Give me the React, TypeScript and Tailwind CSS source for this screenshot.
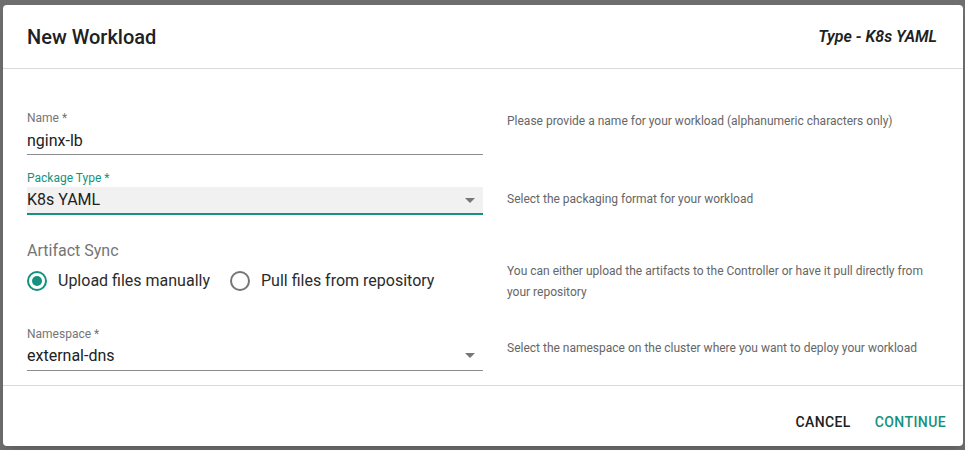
import React from "react";

const teal = "text-[#14927f]";

const HelpText = ({ children, className = "" }: { children: React.ReactNode; className?: string }) => (
  <p className={`text-[12px] leading-[21px] text-[#666666] ${className}`}>{children}</p>
);

const Arrow = () => (
  <svg width="10" height="5" viewBox="0 0 10 5" className="mr-[8px]">
    <path d="M0 0 L10 0 L5 5 Z" fill="#777777" />
  </svg>
);

const Radio = ({ checked, label }: { checked: boolean; label: string }) => (
  <label className="flex items-center gap-[11px]">
    <span
      className={`flex h-[20px] w-[20px] items-center justify-center rounded-full border-2 ${
        checked ? "border-[#14927f]" : "border-[#757575]"
      }`}
    >
      {checked && <span className="h-[10px] w-[10px] rounded-full bg-[#14927f]" />}
    </span>
    <span className="text-[16px] text-[#2b2b2b]">{label}</span>
  </label>
);

const App = () => {
  return (
    <main
      className="h-[450px] w-[965px] overflow-hidden bg-[#6e6e6e] pl-[3px] pt-[5px]"
      style={{ fontFamily: "Roboto, 'Liberation Sans', sans-serif" }}
    >
      <div className="flex h-[441px] w-[960px] flex-col rounded-[4px] bg-white shadow-lg">
        {/* ----------------------------------------header---------------------------------------- */}
        <header className="flex h-[64px] items-center justify-between border-b border-[#d9d9d9] px-[24px]">
          <h2 className="text-[20px] font-medium text-[#212121]">New Workload</h2>
          <span className="mr-[2px] text-[16px] font-semibold italic text-[#212121]">Type - K8s YAML</span>
        </header>

        {/* ----------------------------------------body---------------------------------------- */}
        <section className="flex-1 border-b border-[#d9d9d9] px-[24px] pt-[41px]">
          {/* name */}
          <div className="flex gap-[24px]">
            <div className="w-[456px]">
              <div className="text-[12px] leading-[16px] text-[#757575]">Name *</div>
              <div className="flex h-[29px] items-center border-b border-[#8c8c8c] pb-[1px] pt-[3px] text-[16px] text-[#212121]">
                nginx-lb
              </div>
            </div>
            <HelpText className="pt-[1px]">
              Please provide a name for your workload (alphanumeric characters only)
            </HelpText>
          </div>

          {/* package type */}
          <div className="mt-[15px] flex gap-[24px]">
            <div className="w-[456px]">
              <div className={`text-[12px] leading-[16px] ${teal}`}>Package Type *</div>
              <div className="mt-[1px] flex h-[28px] items-center justify-between border-b-2 border-[#14927f] bg-[#f1f1f1] text-[16px] text-[#212121]">
                <span>K8s YAML</span>
                <Arrow />
              </div>
            </div>
            <HelpText className="pt-[19px]">Select the packaging format for your workload</HelpText>
          </div>

          {/* artifact sync */}
          <div className="mt-[24px] flex gap-[24px]">
            <div className="w-[456px]">
              <div className="text-[16px] leading-[24px] text-[#757575]">Artifact Sync</div>
              <div className="mt-[6px] flex items-center gap-[20px]">
                <Radio checked label="Upload files manually" />
                <Radio checked={false} label="Pull files from repository" />
              </div>
            </div>
            <HelpText className="w-[420px] pt-[22px]">
              You can either upload the artifacts to the Controller or have it pull directly from your
              repository
            </HelpText>
          </div>

          {/* namespace */}
          <div className="mt-[23px] flex gap-[24px]">
            <div className="w-[456px]">
              <div className="text-[12px] leading-[16px] text-[#757575]">Namespace *</div>
              <div className="flex h-[29px] items-center justify-between border-b border-[#8c8c8c] pb-[1px] text-[16px] text-[#212121]">
                <span>external-dns</span>
                <Arrow />
              </div>
            </div>
            <HelpText className="pt-[12px]">
              Select the namespace on the cluster where you want to deploy your workload
            </HelpText>
          </div>
        </section>

        {/* ----------------------------------------footer---------------------------------------- */}
        <footer className="flex h-[60px] items-center justify-end gap-[8px] pr-[9px] pt-[12px]">
          <button className="px-[8px] py-[6px] text-[14px] font-medium uppercase tracking-[0.4px] text-[#212121]">
            Cancel
          </button>
          <button className={`px-[8px] py-[6px] text-[14px] font-medium uppercase tracking-[0.4px] ${teal}`}>
            Continue
          </button>
        </footer>
      </div>
    </main>
  );
};

export default App;
